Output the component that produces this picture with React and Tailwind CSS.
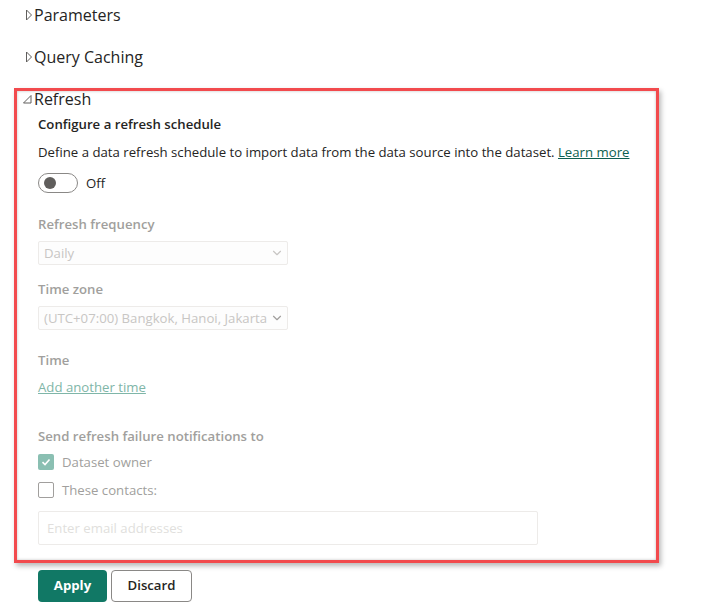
import React, { useState } from 'react';
import { ChevronDown } from 'lucide-react';

function RightTriangle() {
  return (
    <svg width="8" height="12" viewBox="0 0 8 12" className="shrink-0">
      <polygon points="1.5,1 6.5,6 1.5,11" fill="none" stroke="#605e5c" strokeWidth="1" />
    </svg>
  );
}

function OpenTriangle() {
  return (
    <svg width="9" height="9" viewBox="0 0 9 9" className="shrink-0">
      <polygon points="8,0.5 8,8 0.5,8" fill="none" stroke="#605e5c" strokeWidth="1" />
    </svg>
  );
}

function Section({ title }) {
  return (
    <div className="flex items-center h-[30px] pl-[25px] gap-[1px] text-[16px] text-[#252423]">
      <RightTriangle />
      <span>{title}</span>
    </div>
  );
}

function FakeSelect({ value, chevron }) {
  return (
    <div className="mt-[7px] flex items-center w-[250px] h-[24px] border border-[#edebe9] rounded-[2px] bg-[#fdfdfd] pl-[5px] pr-[3px]">
      <span className="flex-1 text-[#c8c6c4] overflow-hidden whitespace-nowrap text-clip">
        {value}
      </span>
      <ChevronDown size={14} strokeWidth={2} color={chevron} className="shrink-0" />
    </div>
  );
}

export default function App() {
  const [enabled, setEnabled] = useState(false);

  return (
    <div className="min-h-screen w-full bg-white font-['Open_Sans',sans-serif] text-[#252423]">
      <Section title="Parameters" />
      <div className="mt-[12px]">
        <Section title="Query Caching" />
      </div>

      {/* Refresh panel */}
      <div className="mt-[16px] ml-[14px] w-[645px] border-[3px] border-[#f24a4d] shadow-[2px_3px_5px_rgba(0,0,0,0.28),inset_0_0_3px_rgba(0,0,0,0.25)] pb-[15px]">
        <div className="flex items-center h-[16px] pl-[6px] gap-[2px] text-[16px] leading-[16px]">
          <OpenTriangle />
          <span>Refresh</span>
        </div>

        <div className="pl-[21px] text-[13.2px] leading-[20px]">
          <div className="mt-[7px] font-semibold">Configure a refresh schedule</div>
          <div className="mt-2 whitespace-nowrap">
            Define a data refresh schedule to import data from the data source into the dataset.{' '}
            <a href="#" className="underline text-[#0e5f50]">Learn more</a>
          </div>

          <div className="mt-[11px] flex items-center gap-[8px]">
            <button
              onClick={() => setEnabled(!enabled)}
              className="w-[40px] h-[20px] rounded-full border border-[#8a8886] flex items-center px-[5px]"
            >
              <span className="w-[12px] h-[12px] rounded-full bg-[#605e5c]" />
            </button>
            <span>Off</span>
          </div>

          <div className="mt-[21px] font-semibold text-[#a19f9d]">Refresh frequency</div>
          <FakeSelect value="Daily" chevron="#c8c6c4" />

          <div className="mt-[14px] font-semibold text-[#a19f9d]">Time zone</div>
          <FakeSelect value="(UTC+07:00) Bangkok, Hanoi, Jakarta" chevron="#a19f9d" />

          <div className="mt-[20px] font-semibold text-[#a19f9d]">Time</div>
          <div className="mt-[7px]">
            <a href="#" className="underline text-[#7fb6a8]">Add another time</a>
          </div>

          <div className="mt-[29px] font-semibold text-[#a19f9d]">Send refresh failure notifications to</div>
          <div className="mt-[6px] flex items-center gap-[8px] h-[20px]">
            <span className="w-[16px] h-[16px] rounded-[2px] bg-[#8abfb2] flex items-center justify-center">
              <svg width="10" height="10" viewBox="0 0 10 10">
                <polyline points="1.5,5.2 4,7.5 8.5,2.5" fill="none" stroke="#fff" strokeWidth="1.6" />
              </svg>
            </span>
            <span className="text-[#a19f9d]">Dataset owner</span>
          </div>
          <div className="mt-[8px] flex items-center gap-[8px] h-[20px]">
            <span className="w-[16px] h-[16px] rounded-[2px] border border-[#a19f9d] bg-white" />
            <span className="text-[#a19f9d]">These contacts:</span>
          </div>

          <div className="mt-[11px] w-[500px] h-[34px] border border-[#edebe9] rounded-[2px] flex items-center pl-[8px] text-[#e1dfdd]">
            Enter email addresses
          </div>
        </div>
      </div>

      <div className="mt-[7px] ml-[38px] flex gap-[4px] text-[13.2px]">
        <button className="w-[69px] h-[32px] rounded-[4px] bg-[#117865] text-white font-bold">Apply</button>
        <button className="w-[81px] h-[32px] rounded-[4px] border border-[#8a8886] bg-white text-[#252423] font-semibold">Discard</button>
      </div>
    </div>
  );
}
